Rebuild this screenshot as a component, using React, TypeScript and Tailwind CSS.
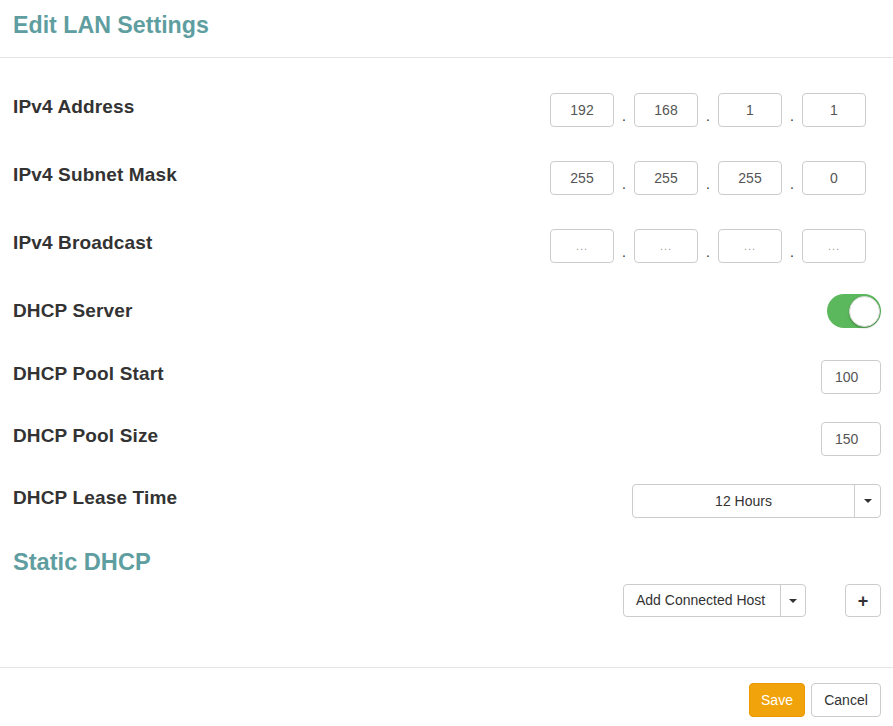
const font = { fontFamily: '"Liberation Sans", Arial, sans-serif' };

const Caret = () => (
  <span className="inline-block h-0 w-0 border-x-[4px] border-t-[4px] border-x-transparent border-t-[#333]" />
);

const IpGroup = ({ values, placeholder }: { values?: string[]; placeholder?: boolean }) => {
  const cells = values ?? ["", "", "", ""];
  return (
    <div className="mr-[15px] flex items-end">
      {cells.map((v, i) => (
        <div key={i} className="flex items-end">
          {i > 0 && <span className="w-[20px] pb-[4px] text-center text-[14px] leading-[14px] text-[#333]">.</span>}
          <div className="flex h-[34px] w-[64px] items-center justify-center rounded-[4px] border border-[#ccc] text-[14px] text-[#555]">
            {placeholder ? <span className="text-[11px] tracking-[1px] text-[#999]">...</span> : v}
          </div>
        </div>
      ))}
    </div>
  );
};

const Label = ({ children }: { children: string }) => (
  <div className="text-[19px] font-bold leading-[28px] tracking-[0.15px] text-[#333]">{children}</div>
);

const SmallInput = ({ value }: { value: string }) => (
  <div className="flex h-[34px] w-[60px] items-center rounded-[4px] border border-[#ccc] px-[13px] text-[14px] text-[#555]">
    {value}
  </div>
);

export default function App() {
  return (
    <div className="h-[726px] w-[893px] overflow-hidden bg-white" style={font}>
      <div className="h-[58px] border-b border-[#e5e5e5] px-[13px] pt-[11px]">
        <h3 className="text-[23.2px] font-bold leading-[28px] text-[#5f9ea0]">Edit LAN Settings</h3>
      </div>

      <div className="flex flex-col pl-[13px] pr-[12px]">
        <div className="mt-[35px] flex items-start justify-between">
          <Label>IPv4 Address</Label>
          <IpGroup values={["192", "168", "1", "1"]} />
        </div>
        <div className="mt-[34px] flex items-start justify-between">
          <Label>IPv4 Subnet Mask</Label>
          <IpGroup values={["255", "255", "255", "0"]} />
        </div>
        <div className="mt-[34px] flex items-start justify-between">
          <Label>IPv4 Broadcast</Label>
          <IpGroup placeholder />
        </div>
        <div className="mt-[31px] flex items-center justify-between">
          <Label>DHCP Server</Label>
          <div className="flex h-[34px] w-[54px] items-center justify-end rounded-full bg-[#5cb85c] pr-[1px]">
            <div className="h-[31px] w-[31px] rounded-full border border-[#d8d8d8] bg-white shadow-[0_1px_2px_rgba(0,0,0,0.25)]" />
          </div>
        </div>
        <div className="mt-[32px] flex items-start justify-between">
          <Label>DHCP Pool Start</Label>
          <SmallInput value="100" />
        </div>
        <div className="mt-[28px] flex items-start justify-between">
          <Label>DHCP Pool Size</Label>
          <SmallInput value="150" />
        </div>
        <div className="mt-[28px] flex items-start justify-between">
          <Label>DHCP Lease Time</Label>
          <div className="flex h-[34px] w-[249px] rounded-[4px] border border-[#ccc] text-[14px] text-[#333]">
            <div className="flex flex-1 items-center justify-center">12 Hours</div>
            <div className="flex w-[26px] items-center justify-center border-l border-[#ccc]">
              <Caret />
            </div>
          </div>
        </div>

        <h3 className="mt-[30px] text-[23.6px] font-bold leading-[28px] text-[#5f9ea0]">Static DHCP</h3>

        <div className="mt-[8px] flex justify-end">
          <div className="flex h-[33px] w-[183px] rounded-[4px] border border-[#ccc] text-[14px] text-[#333]">
            <div className="flex flex-1 items-center pl-[12px]">Add Connected Host</div>
            <div className="flex w-[25px] items-center justify-center border-l border-[#ccc]">
              <Caret />
            </div>
          </div>
          <div className="ml-[39px] flex h-[33px] w-[36px] items-center justify-center rounded-[4px] border border-[#ccc] text-[18px] font-bold leading-none text-[#333]">
            +
          </div>
        </div>
      </div>

      <div className="mt-[50px] flex justify-end gap-[6px] border-t border-[#e5e5e5] pr-[12px] pt-[15px]">
        <button className="h-[34px] w-[56px] rounded-[4px] border border-[#e99a00] bg-[#f0a30a] text-[14px] text-white">
          Save
        </button>
        <button className="h-[34px] w-[70px] rounded-[4px] border border-[#ccc] bg-white text-[14px] text-[#333]">
          Cancel
        </button>
      </div>
    </div>
  );
}
